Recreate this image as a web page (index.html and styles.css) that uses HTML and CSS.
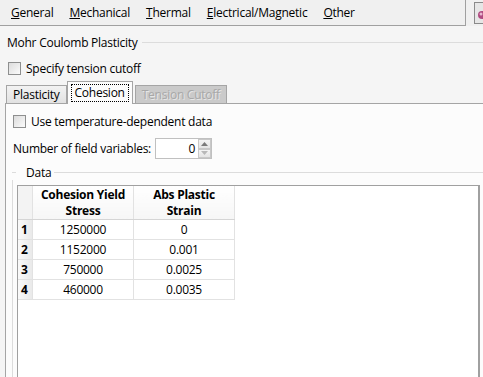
FILE: index.html
```html
<!DOCTYPE html>
<html lang="en">
<head>
    <meta charset="UTF-8">
    <meta name="viewport" content="width=device-width, initial-scale=1.0">
    <title>Edit Material</title>
    <link rel="stylesheet" href="styles.css">
</head>
<body>
    <div class="topbar">
        <div class="menubar">
            <span class="menu-item"><u>G</u>eneral</span>
            <span class="menu-item"><u>M</u>echanical</span>
            <span class="menu-item"><u>T</u>hermal</span>
            <span class="menu-item"><u>E</u>lectrical/Magnetic</span>
            <span class="menu-item"><u>O</u>ther</span>
        </div>
        <div class="tool-btn">
            <svg width="10" height="14" viewBox="0 0 10 14">
                <circle cx="7" cy="9" r="4" fill="#b04a80"/>
                <circle cx="6" cy="8" r="1.5" fill="#e8b8d0"/>
            </svg>
        </div>
    </div>

    <div class="section">
        <div class="group-title">
            <span>Mohr Coulomb Plasticity</span>
            <div class="group-line"></div>
        </div>
        <label class="check-row top-check">
            <span class="checkbox"></span>
            <span>Specify tension cutoff</span>
        </label>

        <div class="tabs">
            <div class="tab">Plasticity</div>
            <div class="tab active"><span class="focus">Cohesion</span></div>
            <div class="tab disabled">Tension Cutoff</div>
        </div>

        <div class="tab-panel">
            <label class="check-row">
                <span class="checkbox"></span>
                <span>Use temperature-dependent data</span>
            </label>
            <div class="field-row">
                <span>Number of field variables:</span>
                <div class="spinbox">
                    <span class="spin-value">0</span>
                    <div class="spin-arrows">
                        <div class="spin-btn">
                            <svg width="7" height="4" viewBox="0 0 7 4"><path d="M0 4 L3.5 0 L7 4 Z" fill="#7a7a7a"/></svg>
                        </div>
                        <div class="spin-btn">
                            <svg width="7" height="4" viewBox="0 0 7 4"><path d="M0 0 L3.5 4 L7 0 Z" fill="#b8b8b8"/></svg>
                        </div>
                    </div>
                </div>
            </div>

            <div class="data-group">
                <div class="data-title">
                    <span>Data</span>
                    <div class="group-line"></div>
                </div>
                <div class="data-box">
                    <div class="table-view">
                        <table class="grid">
                            <thead>
                                <tr>
                                    <th class="corner"></th>
                                    <th>Cohesion Yield<br>Stress</th>
                                    <th>Abs Plastic<br>Strain</th>
                                </tr>
                            </thead>
                            <tbody>
                                <tr><th class="row-head">1</th><td>1250000</td><td>0</td></tr>
                                <tr><th class="row-head">2</th><td>1152000</td><td>0.001</td></tr>
                                <tr><th class="row-head">3</th><td>750000</td><td>0.0025</td></tr>
                                <tr><th class="row-head">4</th><td>460000</td><td>0.0035</td></tr>
                            </tbody>
                        </table>
                    </div>
                </div>
            </div>
        </div>
    </div>
</body>
</html>
```

FILE: styles.css
```css
html, body {
    margin: 0;
    height: 100%;
    overflow: hidden;
}
body {
    font-family: "Open Sans", "Noto Sans", sans-serif;
    font-size: 12px;
    letter-spacing: -0.25px;
    color: #000;
    background-color: #f0f0f0;
    display: flex;
    flex-direction: column;
}
.topbar {
    display: flex;
    height: 26px;
    flex: none;
}
.menubar {
    width: 466px;
    flex: none;
    display: flex;
    align-items: center;
    gap: 16px;
    padding-left: 11px;
    box-sizing: border-box;
    border-right: 1px solid #a0a0a0;
    border-bottom: 1px solid #a0a0a0;
}
.tool-btn {
    margin-left: 8px;
    margin-top: 2px;
    width: 14px;
    height: 20px;
    border: 1px solid #8a8a8a;
    border-right: none;
    background: #e6e6e6;
    display: flex;
    align-items: center;
    justify-content: flex-end;
}
.section {
    background-color: #f5f5f5;
    flex: 1;
    min-height: 0;
    display: flex;
    flex-direction: column;
}
.group-title {
    display: flex;
    align-items: center;
    padding: 7px 0 0 7px;
    height: 18px;
}
.group-line {
    flex: 1;
    height: 1px;
    background: #dcdcdc;
    margin-left: 4px;
}
.check-row {
    display: flex;
    align-items: center;
    gap: 5px;
    height: 16px;
}
.top-check {
    margin: 9px 0 0 8px;
}
.checkbox {
    width: 11px;
    height: 11px;
    border: 1px solid #8e8f8f;
    background: linear-gradient(135deg, #dcdcdc, #fbfbfb);
    flex: none;
}
.tabs {
    display: flex;
    align-items: flex-end;
    margin: 5px 0 0 6px;
    height: 22px;
    flex: none;
}
.tab {
    height: 18px;
    padding: 0 6px;
    display: flex;
    align-items: center;
    border: 1px solid #a5a5a5;
    border-bottom: none;
    background: linear-gradient(#f2f2f2, #e2e2e2);
    box-sizing: border-box;
}
.tab.active {
    height: 23px;
    background: #fcfcfc;
    padding: 0 3px;
    margin-bottom: -1px;
    position: relative;
}
.focus {
    border: 1px dotted #000;
    padding: 0 3px;
    line-height: 16px;
}
.tab.disabled {
    margin-left: 2px;
    color: #a8a8a8;
    background: #cacaca;
    text-shadow: 1px 1px 0 #e6e6e6;
    padding: 0 6px;
}
.tab-panel {
    margin-left: 5px;
    flex: 1;
    min-height: 0;
    display: flex;
    flex-direction: column;
    border-top: 1px solid #a5a5a5;
    border-left: 1px solid #a5a5a5;
    background: #fcfcfc;
    padding: 9px 0 0 7px;
}
.field-row {
    display: flex;
    align-items: center;
    gap: 4px;
    margin-top: 9px;
}
.spinbox {
    width: 57px;
    height: 21px;
    border: 1px solid #c0c0c0;
    background: #fff;
    display: flex;
    box-sizing: border-box;
    align-items: center;
}
.spin-value {
    flex: 1;
    text-align: right;
    padding-right: 3px;
}
.spin-arrows {
    width: 13px;
    height: 19px;
    display: flex;
    flex-direction: column;
}
.spin-btn {
    flex: 1;
    border: 1px solid #c8c8c8;
    background: linear-gradient(#f4f4f4, #e4e4e4);
    display: flex;
    align-items: center;
    justify-content: center;
}
.data-group {
    margin-top: 5px;
    margin-left: -1px;
    flex: 1;
    min-height: 0;
    display: flex;
    flex-direction: column;
}
.data-title {
    display: flex;
    align-items: center;
    height: 16px;
}
.data-title span {
    margin-left: 10px;
}
.data-title .group-line {
    margin-left: 3px;
}
.data-title::before {
    content: "";
    width: 4px;
    height: 1px;
    background: #dcdcdc;
}
.data-box {
    border-left: 1px solid #dcdcdc;
    padding: 5px 0 0 4px;
    flex: 1;
    min-height: 0;
    display: flex;
}
.table-view {
    flex: 1;
    border: 1px solid #a0a0a0;
    border-bottom: none;
    border-right: 2px solid #a0a0a0;
    background: #fff;
    margin-right: 3px;
}
.grid {
    border-collapse: collapse;
}
.grid th, .grid td {
    border: 1px solid #e2e2e2;
    padding: 0;
    text-align: center;
}
.grid thead th {
    font-weight: bold;
    height: 33px;
    line-height: 16px;
    width: 100px;
    border-top: none;
    background: linear-gradient(#ffffff, #f6f6f6);
    border-bottom: 1px solid #d5d5d5;
}
.grid thead th.corner {
    width: 14px;
    border-left: none;
    background: #f3f3f3;
}
.grid td {
    height: 19px;
}
.grid .row-head {
    font-weight: bold;
    background: linear-gradient(90deg, #fafafa, #e9e9e9);
    border-left: none;
    text-align: left;
    padding-left: 3px;
}
```
